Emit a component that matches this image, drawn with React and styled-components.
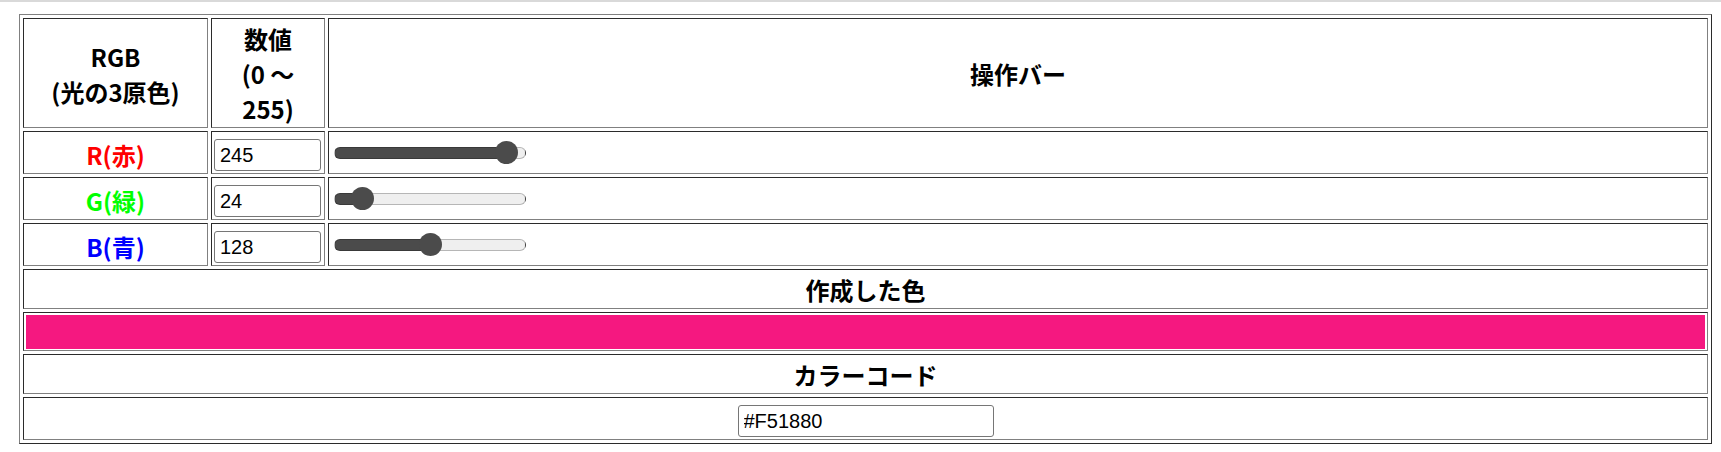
import React, { useState } from "react";
import styled, { createGlobalStyle } from "styled-components";

const GlobalStyle = createGlobalStyle`
  body {
    margin: 0;
    background: #fff;
    font-family: "Noto Sans CJK JP", "Noto Sans", sans-serif;
  }
`;

const TopRule = styled.div`
  height: 2px;
  background: #d9d9d9;
`;

const Page = styled.div`
  padding: 12px 9px 0 19px;
`;

const Table = styled.table`
  width: 100%;
  table-layout: fixed;
  border-collapse: separate;
  border-spacing: 3px;
  border: 1px solid;
  border-color: #808080 #2b2b2b #2b2b2b #808080;
  font-size: 24px;
  line-height: 35px;
  color: #000;
`;

const Head = styled.th`
  box-sizing: border-box;
  width: ${(p) => (p.$width ? `${p.$width}px` : "auto")};
  border: 1px solid;
  border-color: #2b2b2b #808080 #808080 #2b2b2b;
  padding: 2px 2px 1px;
  text-align: center;
  vertical-align: middle;
  font-weight: bold;
`;

const Label = styled.td`
  border: 1px solid;
  border-color: #2b2b2b #808080 #808080 #2b2b2b;
  padding: 4px 2px 1px;
  text-align: center;
  vertical-align: middle;
  font-weight: bold;
  color: ${(p) => p.$color};
`;

const Cell = styled.td`
  border: 1px solid;
  border-color: #2b2b2b #808080 #808080 #2b2b2b;
  padding: ${(p) => p.$pad || "7px 2px 2px"};
  text-align: left;
  vertical-align: middle;
`;

const NumberInput = styled.input`
  display: block;
  box-sizing: border-box;
  width: ${(p) => p.$width || 107}px;
  height: 32px;
  margin: ${(p) => (p.$center ? "0 auto" : "0")};
  padding: 0 5px;
  border: 1px solid #767676;
  border-radius: 3px;
  background: #fff;
  font-family: "Liberation Sans", Arial, sans-serif;
  font-size: 20px;
  color: #000;
  outline: none;
`;

const Slider = styled.input`
  -webkit-appearance: none;
  appearance: none;
  display: block;
  width: 192px;
  height: 24px;
  margin: 0 3px;
  background: transparent;

  &::-webkit-slider-runnable-track {
    box-sizing: border-box;
    height: 12px;
    border-radius: 6px;
    border: 1px solid rgba(0, 0, 0, 0.24);
    background-clip: border-box;
    background-color: #efefef;
    background-image: linear-gradient(
      to right,
      #4b4b4b 0,
      #4b4b4b var(--fill),
      transparent var(--fill)
    );
  }

  &::-webkit-slider-thumb {
    -webkit-appearance: none;
    width: 23px;
    height: 23px;
    margin-top: -6.5px;
    border-radius: 50%;
    background: #4b4b4b;
    border: none;
  }
`;

const Swatch = styled.div`
  height: 34px;
  background: ${(p) => p.$color};
`;

const channels = [
  { key: "r", label: "R(赤)", color: "#ff0000" },
  { key: "g", label: "G(緑)", color: "#00ff00" },
  { key: "b", label: "B(青)", color: "#0000ff" },
];

const toHex = (n) => n.toString(16).toUpperCase().padStart(2, "0");

const App = () => {
  const [rgb, setRgb] = useState({ r: 245, g: 24, b: 128 });

  const update = (key, value) => {
    const v = Math.max(0, Math.min(255, Number(value) || 0));
    setRgb((prev) => ({ ...prev, [key]: v }));
  };

  const hex = `#${toHex(rgb.r)}${toHex(rgb.g)}${toHex(rgb.b)}`;

  return (
    <>
      <GlobalStyle />
      <TopRule />
      <Page>
        <Table>
          <tbody>
            <tr>
              <Head $width={185}>
                RGB
                <br />
                (光の3原色)
              </Head>
              <Head $width={114}>
                数値
                <br />
                (0 ～
                <br />
                255)
              </Head>
              <Head>操作バー</Head>
            </tr>
            {channels.map((c) => {
              // fill ends under the thumb centre
              const fill = 11.5 + (167 * rgb[c.key]) / 255;
              return (
                <tr key={c.key}>
                  <Label $color={c.color}>{c.label}</Label>
                  <Cell>
                    <NumberInput
                      type="text"
                      value={rgb[c.key]}
                      onChange={(e) => update(c.key, e.target.value)}
                    />
                  </Cell>
                  <Cell $pad="0 2px">
                    <Slider
                      type="range"
                      min="0"
                      max="255"
                      value={rgb[c.key]}
                      onChange={(e) => update(c.key, e.target.value)}
                      style={{ "--fill": `${fill}px` }}
                    />
                  </Cell>
                </tr>
              );
            })}
            <tr>
              <Head colSpan={3}>作成した色</Head>
            </tr>
            <tr>
              <Cell colSpan={3} $pad="2px 2px 1px">
                <Swatch $color={hex} />
              </Cell>
            </tr>
            <tr>
              <Head colSpan={3}>カラーコード</Head>
            </tr>
            <tr>
              <Cell colSpan={3}>
                <NumberInput type="text" value={hex} readOnly $width={256} $center />
              </Cell>
            </tr>
          </tbody>
        </Table>
      </Page>
    </>
  );
};

export default App;
